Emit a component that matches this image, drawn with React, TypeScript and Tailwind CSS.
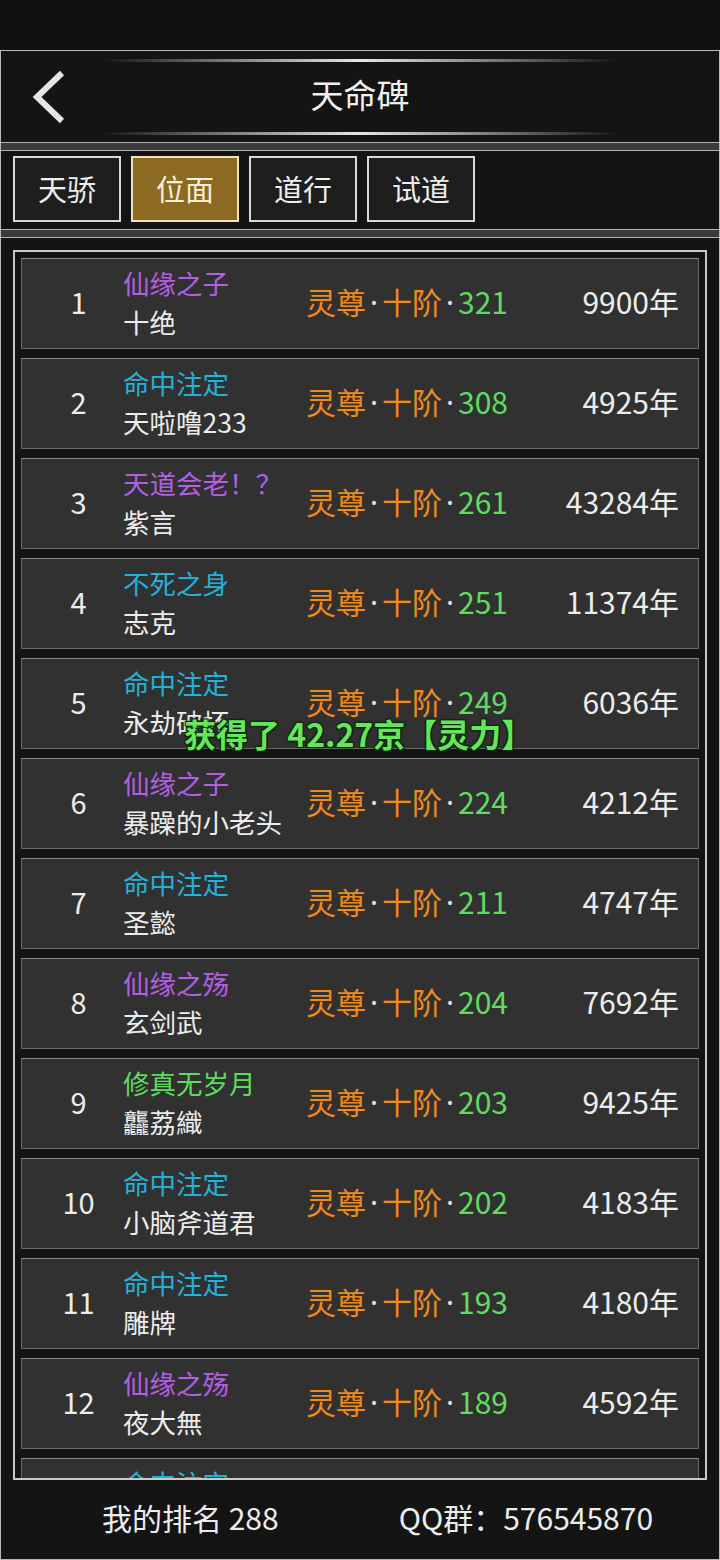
import React from "react";

type Rank = {
  title: string;
  tone: "purple" | "cyan" | "green";
  name: string;
  level: number;
  years: string;
};

const ranks: Rank[] = [
  { title: "仙缘之子", tone: "purple", name: "十绝", level: 321, years: "9900年" },
  { title: "命中注定", tone: "cyan", name: "天啦噜233", level: 308, years: "4925年" },
  { title: "天道会老！？", tone: "purple", name: "紫言", level: 261, years: "43284年" },
  { title: "不死之身", tone: "cyan", name: "志克", level: 251, years: "11374年" },
  { title: "命中注定", tone: "cyan", name: "永劫破坏", level: 249, years: "6036年" },
  { title: "仙缘之子", tone: "purple", name: "暴躁的小老头", level: 224, years: "4212年" },
  { title: "命中注定", tone: "cyan", name: "圣懿", level: 211, years: "4747年" },
  { title: "仙缘之殇", tone: "purple", name: "玄剑武", level: 204, years: "7692年" },
  { title: "修真无岁月", tone: "green", name: "龘荔織", level: 203, years: "9425年" },
  { title: "命中注定", tone: "cyan", name: "小脑斧道君", level: 202, years: "4183年" },
  { title: "命中注定", tone: "cyan", name: "雕牌", level: 193, years: "4180年" },
  { title: "仙缘之殇", tone: "purple", name: "夜大無", level: 189, years: "4592年" },
  { title: "命中注定", tone: "cyan", name: "无名", level: 188, years: "4100年" },
];

const toneClass = {
  purple: "text-[#b45ee2]",
  cyan: "text-[#22b2d8]",
  green: "text-[#5fdc5f]",
};

const tabs = ["天骄", "位面", "道行", "试道"];

const Separator = () => (
  <div className="h-[9px] bg-[#3a3a3a] border-y border-[#b0b0b0]" />
);

const GlowLine = () => (
  <div className="mx-[100px] h-[3px] bg-gradient-to-r from-transparent via-white to-transparent opacity-90" />
);

const Dot = () => (
  <span className="inline-block w-[16px] text-center text-[#e0e0e0] font-['Noto_Sans',sans-serif]">
    ·
  </span>
);

const RankRow: React.FC<{ rank: Rank; index: number }> = ({ rank, index }) => (
  <div className="flex items-center h-[91px] shrink-0 pb-[4px] bg-[#313131] border border-[#6a6a6a] border-t-[#8a8a8a]">
    <div className="w-[101px] pl-[12px] text-center text-[29px] text-[#ececec]">
      {index + 1}
    </div>
    <div className="w-[183px] flex flex-col text-[26.5px] leading-[39px] whitespace-nowrap">
      <span className={toneClass[rank.tone]}>{rank.title}</span>
      <span className="text-[#ececec]">{rank.name}</span>
    </div>
    <div className="text-[30px] text-[#f08a1c] whitespace-nowrap">
      灵尊<Dot />十阶<Dot />
      <span className="text-[#5fdc5f]">{rank.level}</span>
    </div>
    <div className="ml-auto pr-[19px] text-[30px] text-[#ececec]">{rank.years}</div>
  </div>
);

export default function App() {
  return (
    <div
      className="relative w-[720px] h-[1560px] bg-[#111111] flex flex-col overflow-hidden"
      style={{ fontFamily: '"Noto Sans CJK SC", "Noto Sans", sans-serif' }}
    >
      <div className="h-[50px] shrink-0" />

      <div className="flex-1 flex flex-col border border-[#b8b8b8] bg-[#141414]">
        {/* Header */}
        <div className="h-[91px] flex flex-col pt-[8px] pb-[7px]">
          <GlowLine />
          <div className="flex-1 relative flex items-center justify-center pb-[4px]">
            <svg
              className="absolute left-[28px] top-[7px]"
              width="40"
              height="56"
              viewBox="0 0 40 56"
            >
              <path
                d="M33 4 L8 28 L33 52"
                fill="none"
                stroke="#e6e6e6"
                strokeWidth="6"
              />
            </svg>
            <span className="text-[33px] text-[#f0f0f0]">天命碑</span>
          </div>
          <GlowLine />
        </div>

        <Separator />

        {/* Tabs */}
        <div className="h-[78px] flex gap-[10px] pl-[12px] pt-[5px]">
          {tabs.map((tab, i) => (
            <div
              key={tab}
              className={
                i === 1
                  ? "w-[108px] h-[66px] flex items-center justify-center border-2 border-[#f1e2bf] bg-[#8d6a22] text-[29px] text-[#f6eedb]"
                  : "w-[108px] h-[66px] flex items-center justify-center border-2 border-[#d8d8d8] bg-[#1e1e1e] text-[29px] text-[#eeeeee]"
              }
            >
              {tab}
            </div>
          ))}
        </div>

        <Separator />

        {/* Rank list */}
        <div className="mt-[12px] mx-[12px] h-[1230px] border-2 border-[#c8c8c8] bg-[#141414] overflow-hidden">
          <div className="flex flex-col gap-[9px] px-[6px] pt-[6px]">
            {ranks.map((rank, i) => (
              <RankRow key={i} rank={rank} index={i} />
            ))}
          </div>
        </div>

        {/* Footer */}
        <div className="flex-1 flex items-center pl-[101px] pb-[4px] text-[30px] text-[#ececec]">
          <span>我的排名 288</span>
          <span className="ml-[120px]">QQ群：576545870</span>
        </div>
      </div>

      {/* Toast */}
      <div className="absolute left-[184px] top-[709px] text-[32px] font-bold text-[#66e65a] whitespace-nowrap [text-shadow:1px_1px_0_#0a2a0a,-1px_-1px_0_#0a2a0a,1px_-1px_0_#0a2a0a,-1px_1px_0_#0a2a0a,0_0_3px_#000]">
        获得了 42.27京【灵力】
      </div>
    </div>
  );
}
